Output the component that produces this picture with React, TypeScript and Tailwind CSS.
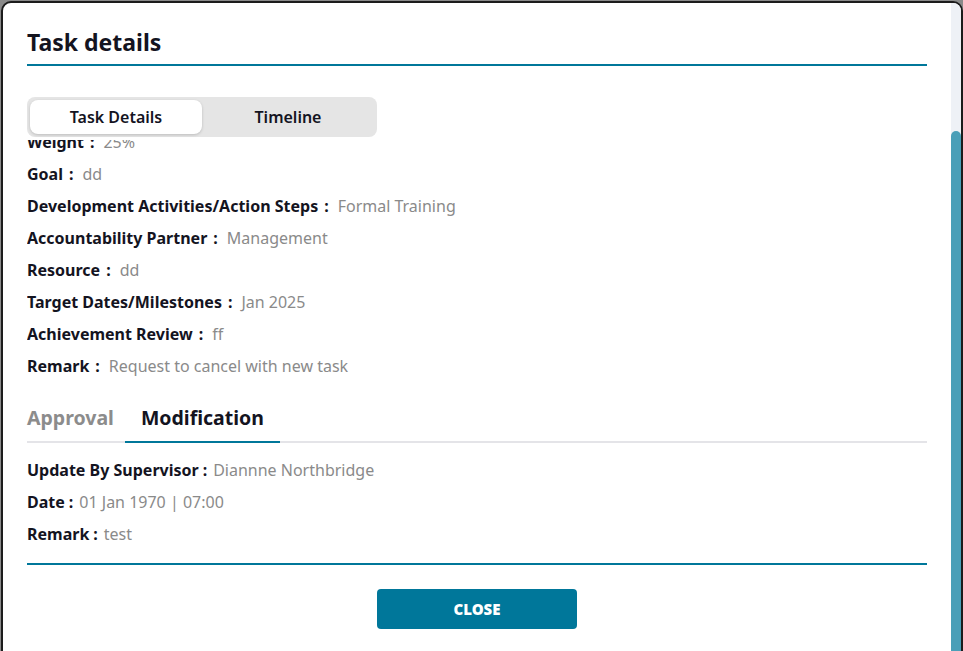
import React from 'react'

const font = { fontFamily: '"Noto Sans", "Open Sans", sans-serif' }

const detailRows = [
  { label: 'Weight', value: '25%' },
  { label: 'Goal', value: 'dd' },
  { label: 'Development Activities/Action Steps', value: 'Formal Training' },
  { label: 'Accountability Partner', value: 'Management' },
  { label: 'Resource', value: 'dd' },
  { label: 'Target Dates/Milestones', value: 'Jan 2025' },
  { label: 'Achievement Review', value: 'ff' },
  { label: 'Remark', value: 'Request to cancel with new task' },
]

const modRows = [
  { label: 'Update By Supervisor', value: 'Diannne Northbridge' },
  { label: 'Date', value: '01 Jan 1970 | 07:00' },
  { label: 'Remark', value: 'test' },
]

function Row({ label, value, wide }: { label: string; value: string; wide?: boolean }) {
  return (
    <div className="text-[16px] leading-[32px] whitespace-nowrap">
      <span className="font-bold text-[#14141f]">{label}</span>
      <span className={wide ? 'ml-[6px] mr-[9px] font-bold text-[#14141f]' : 'ml-[4px] mr-[6px] font-bold text-[#14141f]'}>:</span>
      <span className="text-[#8a8a8a]">{value}</span>
    </div>
  )
}

export default function App() {
  return (
    <div className="w-[963px] h-[651px] overflow-hidden bg-[#8a8a8a]" style={font}>
      <div className="ml-[1px] mt-[1px] w-[962px] h-[680px] border-2 border-[#1c1c1c] rounded-t-[10px] bg-white overflow-hidden flex">
        {/* Content */}
        <div className="flex-1 px-[24px]">
          {/* Header */}
          <div className="pt-[23px]">
            <h2 className="text-[23px] leading-[32px] font-bold text-[#14141f]">Task details</h2>
            <div className="mt-[6px] h-[2px] bg-[#00779a]"></div>
          </div>

          {/* Segmented tabs */}
          <div className="mt-[31px] w-[350px] h-[40px] p-[3px] rounded-[8px] bg-[#e5e5e5] grid grid-cols-2">
            <div className="rounded-[8px] bg-white shadow-[0_1px_3px_rgba(0,0,0,0.18)] flex items-center justify-center text-[16px] font-semibold text-[#14141f]">
              Task Details
            </div>
            <div className="flex items-center justify-center text-[16px] font-semibold text-[#14141f]">
              Timeline
            </div>
          </div>

          {/* Scrolled detail list */}
          <div className="mt-[3px] overflow-hidden">
            <div className="-mt-[14px]">
              {detailRows.map((r) => (
                <Row key={r.label} label={r.label} value={r.value} wide />
              ))}
            </div>
          </div>

          {/* Approval / Modification tabs */}
          <div className="mt-[22px] flex border-b-2 border-[#e4e4e8]">
            <div className="pr-[11px] pb-[9px] text-[19.5px] leading-[28px] font-bold text-[#8c8c8c]">Approval</div>
            <div className="px-[16px] pb-[7px] -mb-[2px] border-b-2 border-[#00779a] text-[19.5px] leading-[28px] font-bold text-[#14141f]">
              Modification
            </div>
          </div>

          <div className="mt-[11px]">
            {modRows.map((r) => (
              <Row key={r.label} label={r.label} value={r.value} />
            ))}
          </div>

          <div className="mt-[13px] h-[2px] bg-[#00779a]"></div>

          <div className="mt-[24px] flex justify-center">
            <button className="w-[200px] h-[40px] rounded-[4px] bg-[#00779a] text-white text-[15px] font-black">
              CLOSE
            </button>
          </div>
        </div>

        {/* Scrollbar */}
        <div className="w-[10px] bg-[#eef1f6] flex flex-col">
          <div className="mt-[128px] flex-1 rounded-t-full bg-[#4a9fb8]"></div>
        </div>
      </div>
    </div>
  )
}
